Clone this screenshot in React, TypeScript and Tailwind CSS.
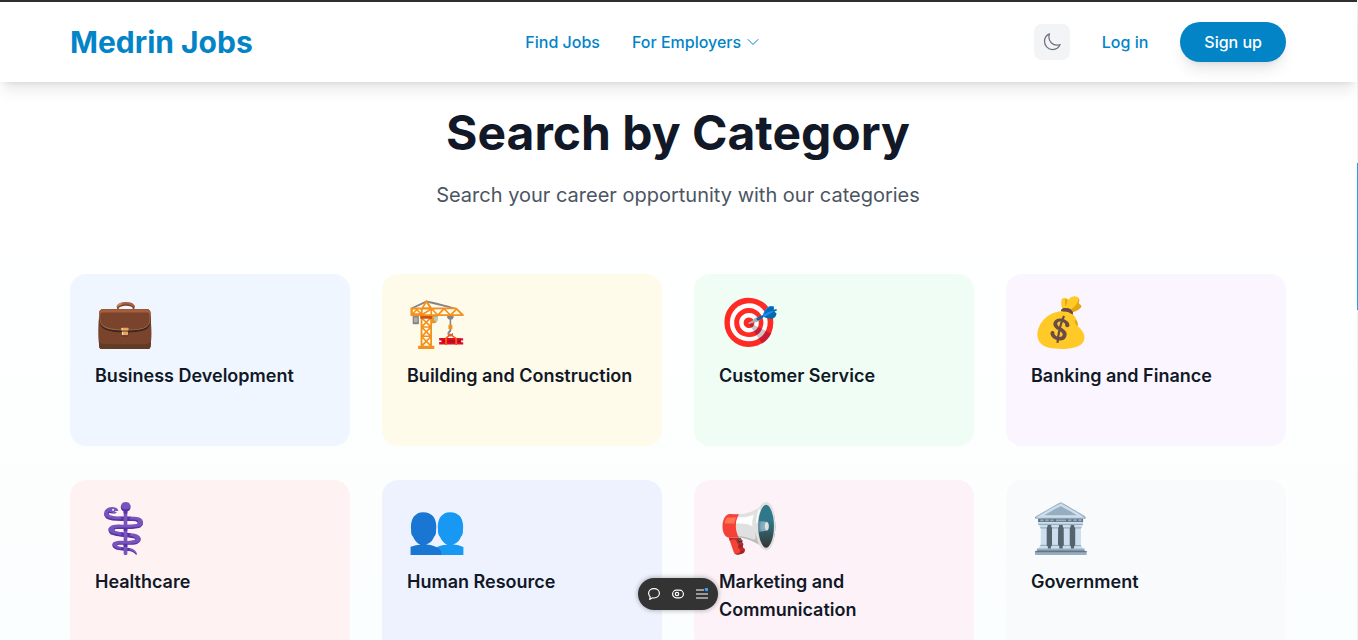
import { HiOutlineMoon, HiOutlineChevronDown } from "react-icons/hi2";

const cards = [
  { e: "💼", t: "Business Development", c: "bg-[#eff6ff]" },
  { e: "🏗️", t: "Building and Construction", c: "bg-[#fffbeb]" },
  { e: "🎯", t: "Customer Service", c: "bg-[#f0fdf4]" },
  { e: "💰", t: "Banking and Finance", c: "bg-[#faf5ff]" },
  { e: "⚕️", t: "Healthcare", c: "bg-[#fef2f2]" },
  { e: "👥", t: "Human Resource", c: "bg-[#eef2ff]" },
  { e: "📢", t: "Marketing and Communication", c: "bg-[#fdf2f8]" },
  { e: "🏛️", t: "Government", c: "bg-[#f9fafb]" },
];

export default function App() {
  return (
    <div className="relative h-[640px] overflow-hidden bg-gradient-to-b from-white from-30% to-[#fbfefe] font-['Inter',sans-serif] text-[#111827]">
      <div className="h-[2px] bg-[#2f2f2f]" />
      <header className="relative z-10 h-[80px] w-[1357px] bg-white shadow-lg">
        <div className="ml-[70px] flex h-full w-[1216px] items-center justify-between">
          <div className="text-3xl font-bold text-[#0284c7]">Medrin Jobs</div>
          <nav className="flex items-center gap-8 font-medium text-[#0284c7]">
            <span>Find Jobs</span>
            <span className="flex items-center gap-1">
              For Employers
              <HiOutlineChevronDown className="h-4 w-4" />
            </span>
          </nav>
          <div className="flex items-center">
            <button className="flex h-9 w-9 items-center justify-center rounded-lg bg-[#f3f4f6] text-[#6b7280]">
              <HiOutlineMoon className="h-5 w-5" />
            </button>
            <span className="ml-8 font-medium text-[#0284c7]">Log in</span>
            <button className="ml-8 h-10 rounded-full bg-[#0284c7] px-6 font-medium text-white shadow-lg">Sign up</button>
          </div>
        </div>
      </header>
      <main className="ml-[70px] w-[1216px] pt-[27px]">
        <h1 className="text-center text-5xl font-bold leading-none text-[#111827]">Search by Category</h1>
        <p className="mt-6 text-center text-xl text-[#4b5563]">Search your career opportunity with our categories</p>
        <div className="mt-[65px] grid grid-cols-4 gap-x-8 gap-y-[34px]">
          {cards.map((c) => (
            <div key={c.t} className={`h-[172px] rounded-2xl px-[25px] pt-[24px] ${c.c}`}>
              <div className="text-5xl leading-none">{c.e}</div>
              <div className="mt-4 text-lg font-semibold text-[#111827]">{c.t}</div>
            </div>
          ))}
        </div>
      </main>
      <div className="absolute left-[638px] top-[578px] z-20 flex h-[32px] w-[80px] items-center justify-center gap-[12px] rounded-full bg-[#333333] shadow-[0_0_4px_1px_rgba(0,0,0,0.25)]">
        <svg width="12" height="12" viewBox="0 0 12 12" fill="none" stroke="#fff" strokeWidth="1.2">
          <path d="M6 .6c3 0 5.400 2 5.400 4.700S9 10 6 10c-.6 0-1.200-.1-1.700-.2L1.800 11.400l.3-2.700C1.100 7.800.6 6.600.6 5.300.6 2.600 3 .6 6 .6z" />
        </svg>
        <svg width="12" height="12" viewBox="0 0 12 12" fill="none" stroke="#fff" strokeWidth="1.2">
          <rect x=".6" y="2.200" width="10.800" height="7.600" rx="3.800" />
          <circle cx="5" cy="6" r="1.700" />
        </svg>
        <svg width="12" height="12" viewBox="0 0 12 12" fill="none" stroke="#fff" strokeWidth="1.200">
          <path d="M0 2h8M0 6h12M0 10h12" />
          <circle cx="10.500" cy="1.500" r="1.800" fill="#3b9eff" stroke="none" />
        </svg>
      </div>
      <div className="absolute right-0 top-0 z-0 h-full w-px bg-[#f1f1f1]" />
      <div className="absolute right-0 top-[163px] z-20 h-[147px] w-px bg-[#2b9fe0]" />
    </div>
  );
}
